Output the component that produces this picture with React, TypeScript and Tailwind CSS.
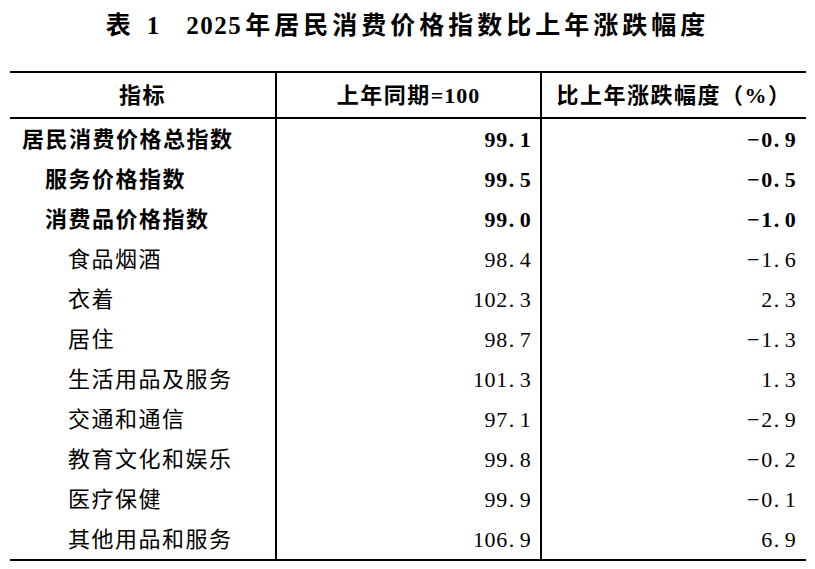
import React from "react";

interface Row {
  name: string;
  level: 0 | 1 | 2;
  bold?: boolean;
  index: string;
  change: string;
}

const rows: Row[] = [
  { name: "居民消费价格总指数", level: 0, bold: true, index: "99.1", change: "−0.9" },
  { name: "服务价格指数", level: 1, bold: true, index: "99.5", change: "−0.5" },
  { name: "消费品价格指数", level: 1, bold: true, index: "99.0", change: "−1.0" },
  { name: "食品烟酒", level: 2, index: "98.4", change: "−1.6" },
  { name: "衣着", level: 2, index: "102.3", change: "2.3" },
  { name: "居住", level: 2, index: "98.7", change: "−1.3" },
  { name: "生活用品及服务", level: 2, index: "101.3", change: "1.3" },
  { name: "交通和通信", level: 2, index: "97.1", change: "−2.9" },
  { name: "教育文化和娱乐", level: 2, index: "99.8", change: "−0.2" },
  { name: "医疗保健", level: 2, index: "99.9", change: "−0.1" },
  { name: "其他用品和服务", level: 2, index: "106.9", change: "6.9" },
];

const indent = ["pl-[12px]", "pl-[35px]", "pl-[58px]"];

// digits in the source are half-width cells, so give every char the same box
const Num = ({ value }: { value: string }) => (
  <span className="inline-flex">
    {value.split("").map((c, i) => {
      if (c === ".")
        return (
          <span key={i} className="inline-block w-[11.7px] pl-[1px] text-left">
            {c}
          </span>
        );
      if (c === "−")
        return (
          <span key={i} className="inline-block w-[14px] pr-[2px] text-center">
            {c}
          </span>
        );
      return (
        <span key={i} className="inline-block w-[11.7px] text-center">
          {c}
        </span>
      );
    })}
  </span>
);

export default function App() {
  return (
    <div className="w-[815px] h-[569px] bg-white text-black font-['Liberation_Serif','Noto_Sans_CJK_SC',serif]">
      {/* Title */}
      <div className="h-[71px] pt-[10px] flex justify-center">
        <h1 className="text-[25px] leading-[32px] font-bold flex">
          <span>表</span>
          <span className="ml-[16px]">1</span>
          <span className="ml-[27px] tracking-[1.5px]">2025</span>
          <span className="ml-[3px] tracking-[4px]">年居民消费价格指数比上年涨跌幅度</span>
        </h1>
      </div>

      {/* Table */}
      <div className="ml-[10px] w-[796px] border-b-2 border-black text-[22px]">
        <div className="grid grid-cols-[267px_265px_1fr] h-[48px] border-y-2 border-black font-bold">
          <div className="flex items-center justify-center border-r-2 border-black tracking-[1.5px]">
            指标
          </div>
          <div className="flex items-center justify-center border-r-2 border-black">
            <span className="tracking-[1.5px]">上年同期</span>
            <span className="tracking-[1px]">=100</span>
          </div>
          <div className="flex items-center justify-center tracking-[1.5px]">
            比上年涨跌幅度（%）
          </div>
        </div>

        {rows.map((r) => (
          <div
            key={r.name}
            className={`grid grid-cols-[267px_265px_1fr] h-10 ${r.bold ? "font-bold" : "font-normal"}`}
          >
            <div
              className={`flex items-center border-r-2 border-black tracking-[1.5px] ${indent[r.level]}`}
            >
              {r.name}
            </div>
            <div className="flex items-center justify-end border-r-2 border-black pr-[9px]">
              <Num value={r.index} />
            </div>
            <div className="flex items-center justify-end pr-[10px]">
              <Num value={r.change} />
            </div>
          </div>
        ))}
      </div>
    </div>
  );
}
